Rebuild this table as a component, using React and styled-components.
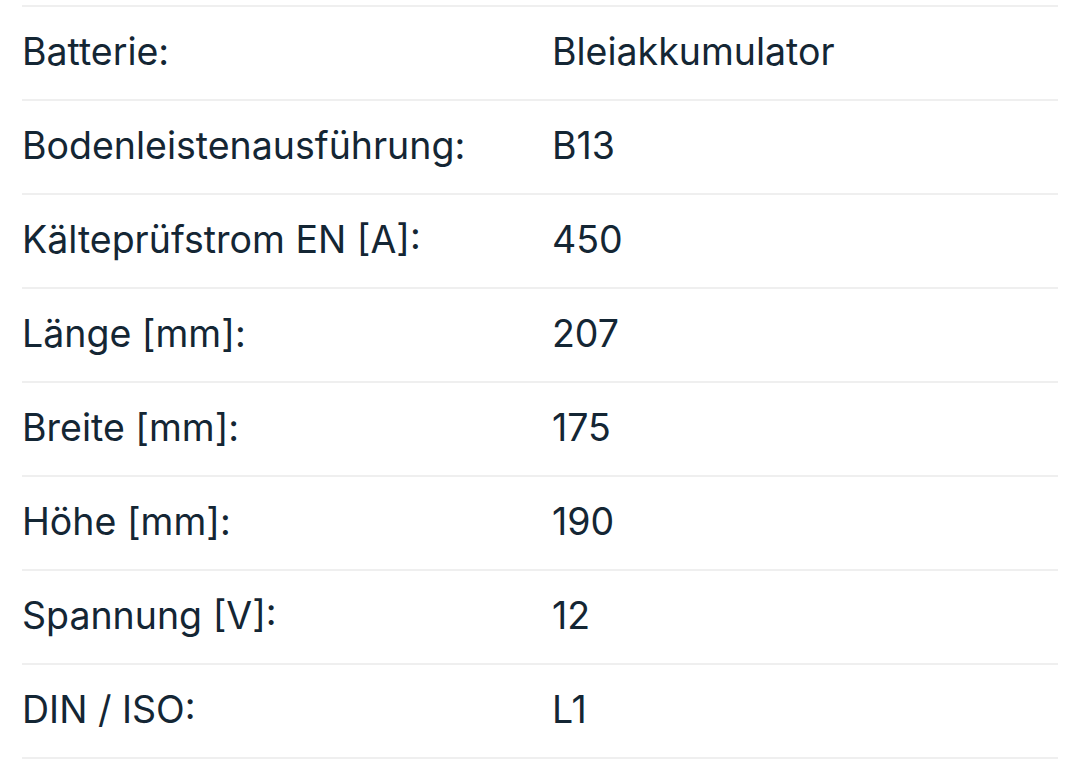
import React from "react";
import styled, { createGlobalStyle } from "styled-components";

const GlobalStyle = createGlobalStyle`
  html, body {
    margin: 0;
    padding: 0;
    background: #ffffff;
  }
  body {
    font-family: Inter, Roboto, sans-serif;
    -webkit-font-smoothing: antialiased;
  }
`;

const Table = styled.div`
  margin: 5px 22px 0 22px;
  display: flex;
  flex-direction: column;
  border-top: 2px solid #efefef;
`;

const Row = styled.div`
  display: grid;
  grid-template-columns: 530px 1fr;
  align-items: center;
  box-sizing: border-box;
  height: 94px;
  padding-bottom: 4px;
  border-bottom: 2px solid #efefef;
`;

const Cell = styled.div`
  font-size: 37.5px;
  line-height: 1.2;
  font-weight: 400;
  color: #142634;
  white-space: nowrap;
`;

const specs = [
  ["Batterie:", "Bleiakkumulator"],
  ["Bodenleistenausführung:", "B13"],
  ["Kälteprüfstrom EN [A]:", "450"],
  ["Länge [mm]:", "207"],
  ["Breite [mm]:", "175"],
  ["Höhe [mm]:", "190"],
  ["Spannung [V]:", "12"],
  ["DIN / ISO:", "L1"],
];

const App = () => {
  return (
    <>
      <GlobalStyle />
      <Table>
        {specs.map(([label, value]) => (
          <Row key={label}>
            <Cell>{label}</Cell>
            <Cell>{value}</Cell>
          </Row>
        ))}
      </Table>
    </>
  );
};

export default App;
